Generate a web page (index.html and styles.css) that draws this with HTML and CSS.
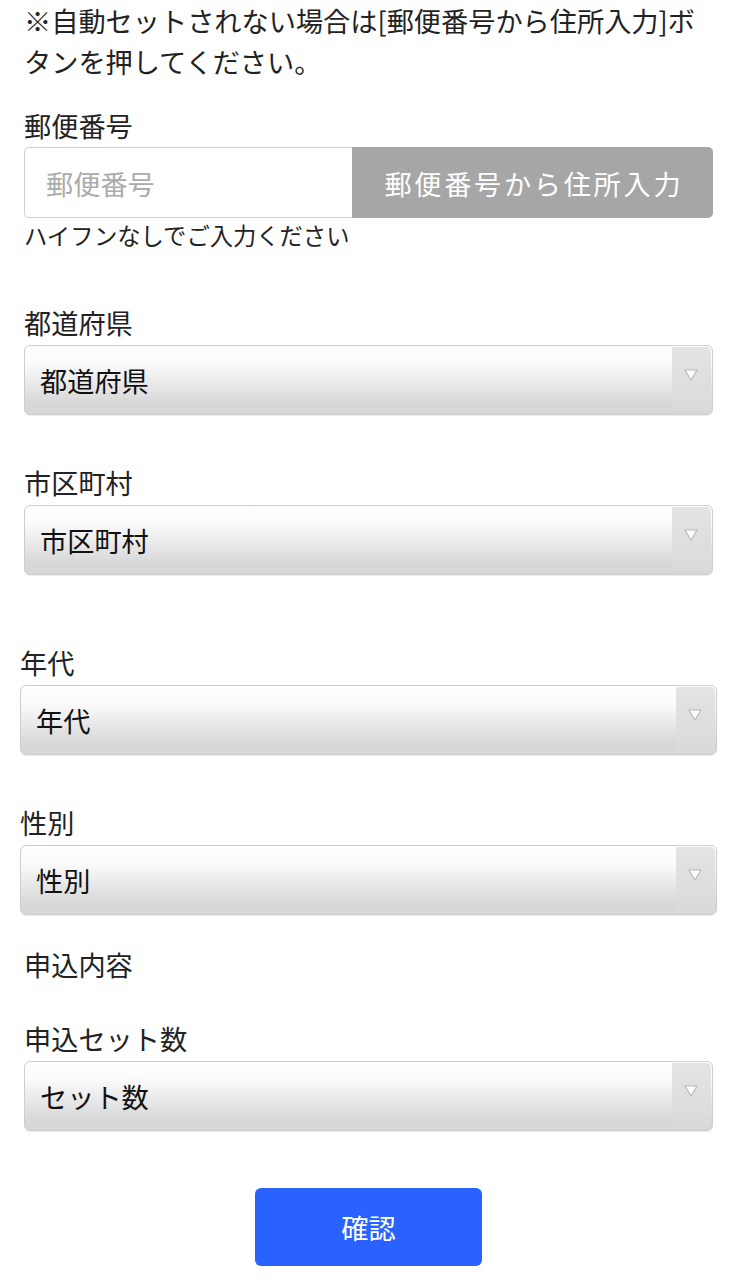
FILE: index.html
```html
<!DOCTYPE html>
<html lang="ja">
<head>
    <meta charset="UTF-8">
    <meta name="viewport" content="width=device-width, initial-scale=1.0">
    <title>お申込みフォーム</title>
    <link rel="stylesheet" href="styles.css">
</head>
<body>
    <form class="form">
        <p class="note">※自動セットされない場合は[郵便番号から住所入力]ボタンを押してください。</p>

        <div class="field field-zip">
            <label class="field-label" for="zip">郵便番号</label>
            <div class="zip-row">
                <input type="text" class="zip-input" id="zip" placeholder="郵便番号">
                <button type="button" class="zip-button">郵便番号から住所入力</button>
            </div>
            <p class="field-hint">ハイフンなしでご入力ください</p>
        </div>

        <div class="field field-pref">
            <label class="field-label" for="pref">都道府県</label>
            <div class="select-box">
                <select class="select" id="pref">
                    <option>都道府県</option>
                </select>
                <span class="select-arrow">
                    <svg width="16" height="14" viewBox="0 0 16 14"><path d="M2 2 H14 L8 12 Z" fill="#fff" stroke="#b8b8b8" stroke-width="1.2" stroke-linejoin="round"/></svg>
                </span>
            </div>
        </div>

        <div class="field">
            <label class="field-label" for="city">市区町村</label>
            <div class="select-box">
                <select class="select" id="city">
                    <option>市区町村</option>
                </select>
                <span class="select-arrow">
                    <svg width="16" height="14" viewBox="0 0 16 14"><path d="M2 2 H14 L8 12 Z" fill="#fff" stroke="#b8b8b8" stroke-width="1.2" stroke-linejoin="round"/></svg>
                </span>
            </div>
        </div>

        <div class="field field-wide field-age">
            <label class="field-label" for="age">年代</label>
            <div class="select-box">
                <select class="select" id="age">
                    <option>年代</option>
                </select>
                <span class="select-arrow">
                    <svg width="16" height="14" viewBox="0 0 16 14"><path d="M2 2 H14 L8 12 Z" fill="#fff" stroke="#b8b8b8" stroke-width="1.2" stroke-linejoin="round"/></svg>
                </span>
            </div>
        </div>

        <div class="field field-wide">
            <label class="field-label" for="gender">性別</label>
            <div class="select-box">
                <select class="select" id="gender">
                    <option>性別</option>
                </select>
                <span class="select-arrow">
                    <svg width="16" height="14" viewBox="0 0 16 14"><path d="M2 2 H14 L8 12 Z" fill="#fff" stroke="#b8b8b8" stroke-width="1.2" stroke-linejoin="round"/></svg>
                </span>
            </div>
        </div>

        <h2 class="section-title">申込内容</h2>

        <div class="field field-sets">
            <label class="field-label" for="sets">申込セット数</label>
            <div class="select-box">
                <select class="select" id="sets">
                    <option>セット数</option>
                </select>
                <span class="select-arrow">
                    <svg width="16" height="14" viewBox="0 0 16 14"><path d="M2 2 H14 L8 12 Z" fill="#fff" stroke="#b8b8b8" stroke-width="1.2" stroke-linejoin="round"/></svg>
                </span>
            </div>
        </div>

        <div class="actions">
            <button type="submit" class="confirm-button">確認</button>
        </div>
    </form>
</body>
</html>
```

FILE: styles.css
```css
body {
    margin: 0;
    background-color: #ffffff;
    color: #222222;
    font-family: "Noto Sans CJK JP", "Noto Sans", sans-serif;
    font-size: 27.2px;
    line-height: 1.5;
}

.form {
    padding: 0 24px 40px;
}

.note {
    margin: 0;
}

.field {
    margin-top: 47px;
}

.field-zip {
    margin-top: 23px;
}

.field-pref {
    margin-top: 49.5px;
}

.field-age {
    margin-top: 67px;
}

.field-wide {
    margin-left: -4px;
    margin-right: -4px;
}

.field-sets {
    margin-top: 34px;
}

.field-label {
    display: block;
    margin-bottom: 2px;
}

.field-hint {
    margin: 0;
    font-size: 23.3px;
    line-height: 34.5px;
}

.zip-row {
    display: grid;
    grid-template-columns: 328px 1fr;
    height: 71px;
}

.zip-input {
    width: 100%;
    min-width: 0;
    box-sizing: border-box;
    margin: 0;
    padding: 0 21px;
    border: 1px solid #cfcfcf;
    border-right: none;
    border-radius: 5px 0 0 5px;
    font-family: inherit;
    font-size: 27.2px;
    color: #222222;
    outline: none;
}

.zip-input::placeholder {
    color: #ababab;
}

.zip-button {
    min-width: 0;
    margin: 0;
    padding: 0 0 0 2.7px;
    border: none;
    border-radius: 0 5px 5px 0;
    background-color: #a6a6a6;
    color: #ffffff;
    font-family: inherit;
    font-size: 27.2px;
    letter-spacing: 2.7px;
    white-space: nowrap;
}

.select-box {
    display: flex;
    height: 70px;
    box-sizing: border-box;
    border: 1px solid #cdcdcd;
    border-radius: 6px;
    background: linear-gradient(to bottom, #ffffff 0%, #fbfbfb 25%, #e6e6e6 60%, #d7d7d7 85%, #d7d7d7 100%);
    box-shadow: 0 1px 1px rgba(0, 0, 0, 0.08);
    overflow: hidden;
}

.select {
    flex: 1;
    min-width: 0;
    appearance: none;
    -webkit-appearance: none;
    margin: 0;
    padding: 0 15px;
    border: none;
    background: transparent;
    font-family: inherit;
    font-size: 27.2px;
    color: #111111;
    outline: none;
}

.select-arrow {
    flex: 0 0 39px;
    display: flex;
    justify-content: center;
    align-items: flex-start;
    padding: 21px 2px 0 0;
    box-sizing: border-box;
    margin: 1px 1px 3px 0;
    border-radius: 0 5px 5px 0;
    background: linear-gradient(to bottom, #e4e4e4, #dadada);
}

.section-title {
    margin: 29px 0 0;
    font-size: 27.2px;
    font-weight: normal;
    line-height: 1.5;
}

.actions {
    display: flex;
    justify-content: center;
    margin-top: 57px;
}

.confirm-button {
    width: 227px;
    height: 78px;
    border: none;
    border-radius: 6px;
    background-color: #2962ff;
    color: #ffffff;
    font-family: inherit;
    font-size: 27.2px;
}
```
